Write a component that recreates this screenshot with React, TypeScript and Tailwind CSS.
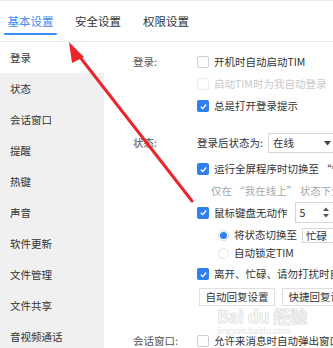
import { ReactNode } from "react"

const SIDE_ITEMS = ["登录", "状态", "会话窗口", "提醒", "热键", "声音", "软件更新", "文件管理", "文件共享", "音视频通话"]

function Box({ checked, disabled }: { checked?: boolean; disabled?: boolean }) {
  if (checked) {
    return (
      <span className="w-[12px] h-[12px] rounded-[2px] bg-[#2f7ff0] flex items-center justify-center shrink-0">
        <svg width="9" height="9" viewBox="0 0 10 10">
          <path d="M2 5.2 L4.2 7.3 L8 2.8" fill="none" stroke="white" strokeWidth="1.5" />
        </svg>
      </span>
    )
  }
  return (
    <span
      className={
        "w-[12px] h-[12px] rounded-[2px] border bg-white shrink-0 " +
        (disabled ? "border-[#ececec]" : "border-[#cfcfcf]")
      }
    />
  )
}

function Row({ children, className = "" }: { children: ReactNode; className?: string }) {
  return <div className={"flex items-center gap-[5px] " + className}>{children}</div>
}

function Caret() {
  return (
    <svg width="7" height="5" viewBox="0 0 7 5">
      <path d="M0 0 L7 0 L3.5 4.5 Z" fill="#444" />
    </svg>
  )
}

export default function App() {
  return (
    <div
      className="relative w-[333px] h-[348px] overflow-hidden bg-white text-[#333] whitespace-nowrap"
      style={{ fontFamily: '"Noto Sans CJK SC", "Noto Sans", sans-serif' }}
    >
      {/* Tabs */}
      <div className="h-[42px] border-t border-b border-t-[#ececec] border-b-[#ebebeb] flex items-start pl-[4px]">
        <div className="flex flex-col items-center w-[53px] pt-[11px]">
          <span className="text-[11.5px] leading-[18px] text-[#3b8cf0]">基本设置</span>
          <span className="mt-[3px] h-[2px] w-[53px] bg-[#3b8cf0] rounded-full" />
        </div>
        <span className="ml-[18px] pt-[11px] text-[11.5px] leading-[18px]">安全设置</span>
        <span className="ml-[22px] pt-[11px] text-[11.5px] leading-[18px]">权限设置</span>
      </div>

      <div className="flex">
        {/* Sidebar */}
        <div className="w-[104px] h-[306px] bg-[#f0f0f0] shrink-0">
          {SIDE_ITEMS.map((s, i) => (
            <div
              key={s}
              className={
                "h-[31px] flex items-center pl-[10px] text-[10.5px] " + (i === 0 ? "bg-white" : "")
              }
            >
              {s}
            </div>
          ))}
        </div>

        {/* Content */}
        <div className="flex-1 pl-[29px] pt-[9px] text-[10.5px] overflow-hidden">
          {/* 登录 */}
          <div className="grid grid-cols-[64px_1fr]">
            <span className="leading-[22px] h-[22px] text-[#555]">登录:</span>
            <div>
              <Row className="h-[22px]">
                <Box />
                <span>开机时自动启动TIM</span>
              </Row>
              <Row className="h-[22px]">
                <Box disabled />
                <span className="text-[#c9c9c9]">启动TIM时为我自动登录</span>
              </Row>
              <Row className="h-[22px]">
                <Box checked />
                <span>总是打开登录提示</span>
              </Row>
            </div>
          </div>

          {/* 状态 */}
          <div className="grid grid-cols-[64px_1fr] mt-[16px]">
            <span className="leading-[20px] h-[20px] text-[#555]">状态:</span>
            <div>
              <Row className="h-[20px] gap-[4px]">
                <span>登录后状态为:</span>
                <span className="h-[20px] w-[70px] border border-[#d6d6d6] flex items-center justify-between pl-[4px] pr-[6px]">
                  <span>在线</span>
                  <Caret />
                </span>
              </Row>
              <Row className="h-[22px] mt-[5px]">
                <Box checked />
                <span>运行全屏程序时切换至 “忙碌” 状态</span>
              </Row>
              <div className="h-[22px] leading-[22px] pl-[14px] text-[#a8a8a8]">仅在 “我在线上” 状态下生效</div>
              <Row className="h-[21px]">
                <Box checked />
                <span>鼠标键盘无动作</span>
                <span className="ml-[2px] h-[21px] w-[42px] border border-[#d6d6d6] flex items-center justify-between pl-[4px] pr-[7px]">
                  <span>5</span>
                  <svg width="6" height="11" viewBox="0 0 6 11">
                    <path d="M0 4 L3 0.5 L6 4 Z" fill="#555" />
                    <path d="M0 7 L3 10.5 L6 7 Z" fill="#555" />
                  </svg>
                </span>
              </Row>
              <Row className="h-[18px] mt-[3px] pl-[21px]">
                <span className="w-[11px] h-[11px] rounded-full border border-[#d8d8d8] flex items-center justify-center">
                  <span className="w-[7px] h-[7px] rounded-full bg-[#2f7ff0]" />
                </span>
                <span>将状态切换至</span>
                <span className="h-[15px] w-[40px] border border-[#d6d6d6] pl-[3px] leading-[13px]">忙碌</span>
              </Row>
              <Row className="h-[18px] pl-[21px]">
                <span className="w-[11px] h-[11px] rounded-full border border-[#e2e2e2]" />
                <span>自动锁定TIM</span>
              </Row>
              <Row className="h-[22px] mt-[1px]">
                <Box checked />
                <span>离开、忙碌、请勿打扰时自动回复</span>
              </Row>
              <div className="flex gap-[7px] mt-[3px] pl-[2px]">
                <span className="h-[18px] w-[76px] border border-[#e0e0e0] flex items-center justify-center">自动回复设置</span>
                <span className="h-[18px] w-[76px] border border-[#e0e0e0] flex items-center justify-center">快捷回复设置</span>
              </div>
            </div>
          </div>

          {/* 会话窗口 */}
          <div className="grid grid-cols-[64px_1fr] mt-[24px]">
            <span className="leading-[22px] h-[22px] text-[#555]">会话窗口:</span>
            <Row className="h-[22px]">
              <Box />
              <span>允许来消息时自动弹出窗口</span>
            </Row>
          </div>
        </div>
      </div>

      {/* watermark overlay */}
      <div className="absolute left-[217px] top-[306px] flex flex-col pointer-events-none">
        <span
          className="text-[17px] leading-[19px] font-bold text-transparent"
          style={{ WebkitTextStroke: "1px #e3e3e3" }}
        >
          Bai du 经验
        </span>
        <span className="text-[8.5px] leading-[11px] text-[#e3e3e3]">jingyan.baidu.com</span>
      </div>

      {/* red arrow overlay */}
      <svg className="absolute left-0 top-0 pointer-events-none" width="333" height="348" viewBox="0 0 333 348">
        <line x1="192" y1="201" x2="76" y2="52" stroke="#e8262b" strokeWidth="3" strokeLinecap="round" />
        <path d="M69 42 L84 57 L72 63 Z" fill="#e8262b" />
      </svg>
    </div>
  )
}
